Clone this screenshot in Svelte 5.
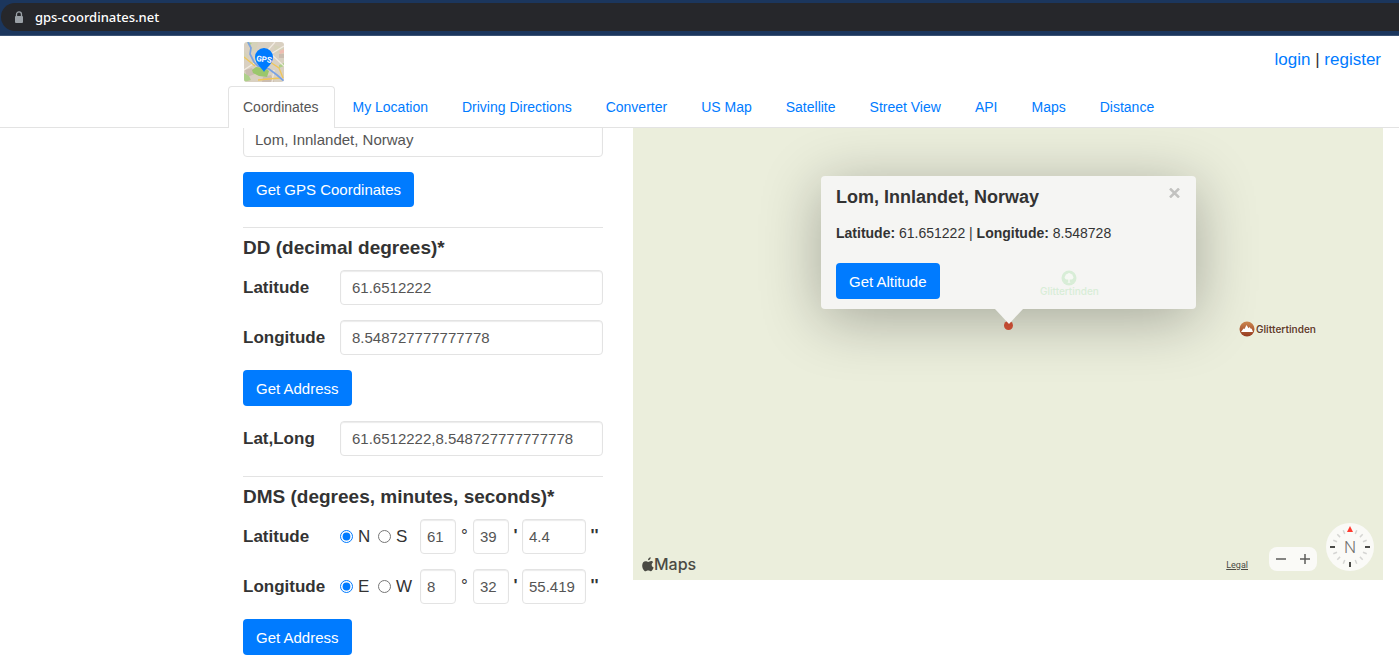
<script>
  const tabs = ['Coordinates', 'My Location', 'Driving Directions', 'Converter', 'US Map', 'Satellite', 'Street View', 'API', 'Maps', 'Distance'];

  let address = $state('Lom, Innlandet, Norway');
  let latitude = $state('61.6512222');
  let longitude = $state('8.548727777777778');
  let latlong = $state('61.6512222,8.548727777777778');
  let popupOpen = $state(true);

  const dms = $state([
    { id: 'lat', label: 'Latitude', options: ['N', 'S'], side: 'N', deg: '61', min: '39', sec: '4.4' },
    { id: 'lng', label: 'Longitude', options: ['E', 'W'], side: 'E', deg: '8', min: '32', sec: '55.419' }
  ]);

  // Minor compass ticks, in degrees from north
  const ticks = [22, 45, 68, 112, 135, 158, 202, 225, 248, 292, 315, 338];
</script>

<div class="browser">
  <div class="omnibox">
    <svg class="lock" width="10" height="13" viewBox="0 0 10 13" aria-hidden="true">
      <path d="M2.500 5.500V3.400a2.500 2.500 0 0 1 5 0v2.100" fill="none" stroke="#9aa0a6" stroke-width="1.300" />
      <rect x="1" y="5" width="8" height="7" rx="1" fill="#9aa0a6" />
    </svg>
    <span>gps-coordinates.net</span>
  </div>
</div>

<header>
  <div class="top">
    <a class="logo" href="#home" aria-label="GPS coordinates">
      <svg width="40" height="40" viewBox="0 0 40 40">
        <defs><clipPath id="logo-clip"><rect width="40" height="40" rx="3" /></clipPath></defs>
        <g clip-path="url(#logo-clip)" fill="none">
          <rect width="40" height="40" fill="#d9d0c1" />
          <path d="M8 0h6l-2 8-8 3zM0 9l5 6-5 4zM30 3l10 3v7l-9-3z" fill="#d5d2b9" />
          <path d="M35 12h5v4h-5zM1 28l7-2 3 6-8 3zM19 35l8-2 3 7H18z" fill="#cabcb0" />
          <path d="M35 9l5-2v4l-4 1z" fill="#eebcb2" />
          <path d="M8 28l4-3 9 1 4 3-2 6-8-1-6-3z" fill="#9bc76b" />
          <path d="M0 31l5 3 2 4-7 2zM35 23l5-2v3l-5 2zM3 0l5 1-3 3z" fill="#aed08a" />
          <path d="M22 15L40 4M0 28l12-8M27 12l13 12M24 8l7-8M28 40l2-12" stroke="#f1ebe2" stroke-width="1.200" />
          <path d="M0 15l11 9M26 20l9 6 4 10M14 38l10-1 12-1" stroke="#f0c65a" stroke-width="1.300" />
          <path d="M4 0l3 6-1 6 4 8 4 4 11 3 8 6 7 6" stroke="#7aa2e4" stroke-width="1.700" />
          <path d="M20 30c-1-3-9-8-9-15a9 9 0 0 1 18 0c0 7-7 11-9 15z" fill="#007bff" />
        </g>
        <text x="20" y="20" text-anchor="middle" transform="rotate(8 20 17)">GPS</text>
      </svg>
    </a>
    <div class="account"><a href="#login">login</a> | <a href="#register">register</a></div>
  </div>
  <nav>
    {#each tabs as tab, i}
      <a href="#tab-{i}" class:active={i === 0}>{tab}</a>
    {/each}
  </nav>
</header>

<main>
  <form onsubmit={(e) => e.preventDefault()}>
    <input type="text" aria-label="Address" bind:value={address} />
    <button class="primary" type="button">Get GPS Coordinates</button>

    <hr />
    <h4>DD (decimal degrees)*</h4>
    <div class="row">
      <label for="latitude">Latitude</label>
      <input id="latitude" type="text" bind:value={latitude} />
    </div>
    <div class="row">
      <label for="longitude">Longitude</label>
      <input id="longitude" type="text" bind:value={longitude} />
    </div>
    <button class="primary tall" type="button">Get Address</button>
    <div class="row">
      <label for="latlong">Lat,Long</label>
      <input id="latlong" type="text" bind:value={latlong} />
    </div>

    <hr />
    <h4>DMS (degrees, minutes, seconds)*</h4>
    {#each dms as row}
      <div class="row">
        <label for="{row.id}-deg">{row.label}</label>
        <div class="dms">
          <div class="sides">
            {#each row.options as option}
              <label><input type="radio" name={row.id} value={option} bind:group={row.side} />{option}</label>
            {/each}
          </div>
          <input id="{row.id}-deg" type="text" bind:value={row.deg} />
          <span>°</span>
          <input type="text" aria-label="{row.label} minutes" bind:value={row.min} />
          <b>'</b>
          <input type="text" aria-label="{row.label} seconds" bind:value={row.sec} />
          <b>''</b>
        </div>
      </div>
    {/each}
    <button class="primary tall" type="button">Get Address</button>
  </form>

  <section class="map" aria-label="Map">
    <div class="place">
      <svg width="16" height="16" viewBox="0 0 16 16" aria-hidden="true">
        <defs>
          <linearGradient id="peak" x2="0" y2="1"><stop stop-color="#cd8850" /><stop offset="1" stop-color="#963a20" /></linearGradient>
        </defs>
        <circle cx="8" cy="8" r="7.500" fill="url(#peak)" />
        <path d="M2 11l2.500-3.500 1 .5L7.500 4l2 3.200 1-1.200 1.500 2 .6-.4L14 11z" fill="#fff" />
      </svg>
      <span>Glittertinden</span>
    </div>

    <div class="pin"></div>

    {#if popupOpen}
      <div class="popup">
        <div class="popup-head">
          <h4>Lom, Innlandet, Norway</h4>
          <button class="close" type="button" aria-label="Close" onclick={() => (popupOpen = false)}>
            <svg width="11" height="10" viewBox="0 0 11 10"><path d="M1 .5l9 9M10 .5l-9 9" stroke="#c2c2c0" stroke-width="2.500" /></svg>
          </button>
        </div>
        <p><b>Latitude:</b> 61.651222 | <b>Longitude:</b> 8.548728</p>
        <button class="primary tall" type="button">Get Altitude</button>
        <div class="park">
          <svg width="16" height="16" viewBox="0 0 16 16" aria-hidden="true">
            <circle cx="8" cy="8" r="7.500" fill="#d8edd7" />
            <path d="M7.300 12V9.400H5.500a2 2 0 0 1-1.200-3.500 2 2 0 0 1 2-2 2.400 2.400 0 0 1 3.600 0 2 2 0 0 1 1.900 2 2 2 0 0 1-1.300 3.500H8.700V12l1 .8H6.300z" fill="#f6f8f4" />
          </svg>
          <span>Glittertinden</span>
        </div>
        <svg class="arrow" width="28" height="15" viewBox="0 0 28 15" aria-hidden="true"><path d="M0 0h28L14 15z" fill="#f5f5f3" /></svg>
      </div>
    {/if}

    <div class="brand">
      <svg width="12" height="15" viewBox="0 0 12 15" aria-hidden="true">
        <path d="M8.700.3c.1 1.700-1.200 3-2.700 3C5.800 1.800 7.200.5 8.700.3zM11.200 5.200c-2.200 1.300-1.900 4.200.5 5.200-.6 1.800-1.800 3.800-3 3.800-1 0-1.300-.6-2.500-.6s-1.600.6-2.500.6C1.700 14.200.2 10.900.2 8.400c0-2.600 1.600-4.200 3.400-4.200 1.100 0 1.900.7 2.600.7s1.600-.8 3-.8c.8 0 1.600.4 2 1.100z" fill="#4a4a44" />
      </svg>
      <span>Maps</span>
    </div>

    <div class="controls">
      <a href="#legal">Legal</a>
      <div class="zoom">
        <button type="button" aria-label="Zoom out"><svg width="10" height="10" viewBox="0 0 10 10"><path d="M0 5h10" stroke="#5d5d5b" stroke-width="1.500" /></svg></button>
        <button type="button" aria-label="Zoom in"><svg width="10" height="10" viewBox="0 0 10 10"><path d="M0 5h10M5 0v10" stroke="#5d5d5b" stroke-width="1.500" /></svg></button>
      </div>
      <button class="compass" type="button" aria-label="North">
        <svg width="48" height="48" viewBox="0 0 48 48">
          {#each ticks as angle}
            <path d="M24 6v4" stroke="#d5d5d3" stroke-width="1.500" transform="rotate({angle} 24 24)" />
          {/each}
          <path d="M24 39v5M4 24h5M39 24h5" stroke="#4a4a48" stroke-width="2" />
          <path d="M24 3l3 6h-6z" fill="#ff3b30" />
          <text x="24" y="30" text-anchor="middle">N</text>
        </svg>
      </button>
    </div>
  </section>
</main>

<style>
  :global(body) {
    margin: 0;
    background: #fff;
    color: #333;
    font-family: "Liberation Sans", Arial, sans-serif;
    font-size: 17px;
    overflow: hidden;
  }
  * {
    box-sizing: border-box;
  }
  a {
    color: #007bff;
    text-decoration: none;
  }
  svg {
    display: block;
    flex: none;
  }

  .browser {
    background: #1b365d;
    border-bottom: 1px solid #3a5274;
    padding: 3px 0 4px 1px;
  }
  .omnibox {
    display: flex;
    align-items: center;
    gap: 11px;
    height: 28px;
    padding-left: 13px;
    border-radius: 14px 0 0 14px;
    background: #26272b;
    color: #fff;
    font: 500 13px "Noto Sans", "Open Sans", sans-serif;
  }

  header {
    position: relative;
    z-index: 1;
    background: #fff;
  }
  .top {
    display: flex;
    justify-content: space-between;
    height: 50px;
    padding: 6px 18px 0 244px;
  }
  .logo text {
    fill: #fff;
    font: bold 8px Roboto, sans-serif;
  }
  .account {
    padding-top: 8px;
    line-height: 20px;
  }
  nav {
    display: flex;
    gap: 2px;
    height: 42px;
    padding-left: 228px;
    border-bottom: 1px solid #e3e3e3;
    font-size: 14px;
    line-height: 20px;
  }
  nav a {
    height: 42px;
    padding: 10px 15px 10px 14px;
    border: 1px solid transparent;
    border-bottom: 0;
    border-radius: 4px 4px 0 0;
  }
  nav a + a {
    padding-left: 15px;
  }
  nav a.active {
    border-color: #e3e3e3;
    background: #fff;
    color: #555;
  }

  main {
    display: grid;
    grid-template-columns: 12fr 25fr;
    align-items: start;
    gap: 30px;
    margin-top: -6px;
    padding: 0 16px 0 243px;
  }
  form > * {
    margin: 0 0 15px;
  }
  input[type="text"] {
    display: block;
    width: 100%;
    min-width: 0;
    height: 35px;
    padding: 0 11px;
    border: 1px solid #e3e3e3;
    border-radius: 4px;
    background: #fff;
    box-shadow: inset 0 1px 1px rgba(0, 0, 0, 0.08);
    color: #555;
    font: 15px "Liberation Sans", Arial, sans-serif;
  }
  .primary {
    display: block;
    height: 35px;
    padding: 0 13px;
    border: 0;
    border-radius: 4px;
    background: #007bff;
    color: #fff;
    font: 15px "Liberation Sans", Arial, sans-serif;
  }
  .tall {
    height: 36px;
  }
  hr {
    height: 1px;
    margin: 20px 0 0;
    border: 0;
    background: #e3e3e3;
  }
  h4 {
    margin: 0;
    font-size: 19px;
    line-height: 22px;
  }
  form h4 {
    padding: 9px 0 11px;
  }
  .row {
    display: grid;
    grid-template-columns: 97px 1fr;
    align-items: center;
  }
  .row > label {
    font-weight: bold;
  }
  .dms {
    display: grid;
    grid-template-columns: 80px 36px 17px 36px 13px 64px 17px;
    text-align: center;
  }
  .dms input[type="text"] {
    padding: 0 6px;
  }
  .dms > span,
  .dms > b {
    line-height: 33px;
  }
  .sides {
    display: grid;
    grid-template-columns: 38px 38px;
    align-items: center;
  }
  .sides label {
    display: flex;
    align-items: center;
    gap: 5px;
  }
  .sides input {
    width: 13px;
    height: 13px;
    margin: 0;
    flex: none;
    accent-color: #007bff;
  }

  .map {
    position: relative;
    height: 458px;
    background: #ebeedc;
    overflow: hidden;
  }
  .place {
    position: absolute;
    top: 199px;
    right: 67px;
    display: flex;
    align-items: center;
    gap: 1px;
    color: #63412b;
    font: 600 10px Inter, sans-serif;
    text-shadow: 0 0 2px #fff;
  }
  .pin {
    position: absolute;
    top: 199px;
    left: 50%;
    width: 9px;
    height: 9px;
    margin-left: -4px;
    border-radius: 50%;
    background: #dc5539;
  }
  .popup {
    position: absolute;
    top: 54px;
    left: 50%;
    width: 375px;
    margin-left: -187px;
    padding: 10px 15px;
    border-radius: 4px;
    background: #f5f5f3;
    box-shadow: 0 10px 60px rgba(0, 0, 0, 0.3);
    font-size: 14px;
  }
  .popup-head {
    display: flex;
    justify-content: space-between;
    align-items: start;
  }
  .popup-head h4 {
    font-size: 18px;
  }
  .popup p {
    margin: 15px 0 20px;
    line-height: 20px;
  }
  .close {
    padding: 2px 1px 0;
    border: 0;
    background: none;
  }
  .park {
    position: absolute;
    top: 94px;
    left: 219px;
    display: grid;
    justify-items: center;
    color: #d8edd7;
    font: 500 10px/10px Inter, sans-serif;
  }
  .arrow {
    position: absolute;
    top: 100%;
    left: 174px;
  }
  .brand {
    position: absolute;
    bottom: 6px;
    left: 9px;
    display: flex;
    align-items: center;
    color: #4a4a44;
    font: 500 16px/20px Inter, sans-serif;
  }
  .controls {
    position: absolute;
    right: 9px;
    bottom: 9px;
    display: flex;
    align-items: end;
  }
  .controls a {
    margin-right: 21px;
    color: #4a4a44;
    font: 9px/12px Roboto, sans-serif;
    text-decoration: underline;
  }
  .zoom {
    display: flex;
    height: 24px;
    margin-right: 9px;
    border-radius: 8px;
    background: #fafaf7;
  }
  .zoom button {
    display: grid;
    place-items: center;
    width: 24px;
    padding: 0;
    border: 0;
    background: none;
  }
  .compass {
    padding: 0;
    border: 0;
    border-radius: 50%;
    background: #fafaf7;
  }
  .compass text {
    fill: #70706e;
    font: 300 17px Roboto, sans-serif;
  }
</style>
